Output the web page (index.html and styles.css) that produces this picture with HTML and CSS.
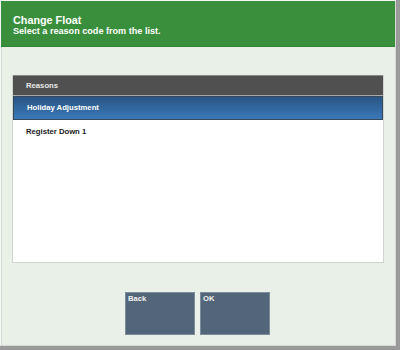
FILE: index.html
```html
<!DOCTYPE html>
<html>
<head>
<meta charset="utf-8">
<link rel="stylesheet" href="styles.css">
</head>
<body>
<div class="window">
  <div class="banner">
    <div class="title">Change Float</div>
    <div class="subtitle">Select a reason code from the list.</div>
  </div>
  <div class="content">
    <div class="list">
      <div class="list-head">Reasons</div>
      <div class="row selected">Holiday Adjustment</div>
      <div class="row">Register Down 1</div>
    </div>
    <div class="actions">
      <div class="btn">Back</div>
      <div class="btn">OK</div>
    </div>
  </div>
</div>
</body>
</html>
```

FILE: styles.css
```css
html, body {
  margin: 0;
  padding: 0;
  width: 400px;
  height: 350px;
  background: #9a9a9a;
  font-family: "Liberation Sans", Arial, sans-serif;
  font-weight: bold;
  overflow: hidden;
}
.window {
  box-sizing: border-box;
  width: 396px;
  height: 346px;
  background: #e9f0e8;
  border: 1px solid #f4f6f4;
  border-right-color: #d6d9d6;
  border-bottom-color: #d6d9d6;
  display: flex;
  flex-direction: column;
}
.banner {
  height: 46px;
  background: #3a8f3c;
  border-bottom: 1px solid #2f8631;
  box-sizing: border-box;
  padding: 13px 0 0 12px;
  color: #fff;
}
.title {
  font-size: 10.8px;
  line-height: 12px;
}
.subtitle {
  font-size: 9.1px;
  line-height: 11px;
}
.content {
  flex: 1;
  display: flex;
  flex-direction: column;
  padding: 28px 11px 0 11px;
  box-shadow: inset 1px 0 0 #d3dad3;
}
.list {
  height: 188px;
  box-sizing: border-box;
  background: #fff;
  border: 1px solid #d0d4d0;
  border-top: none;
  display: flex;
  flex-direction: column;
}
.list-head {
  height: 21px;
  box-sizing: border-box;
  background: #505050;
  border-top: 1px solid #8a8a8a;
  border-bottom: 1px solid #a8a8a8;
  color: #e8e8e8;
  font-size: 7.7px;
  line-height: 19px;
  padding-left: 13px;
}
.row {
  height: 24px;
  box-sizing: border-box;
  font-size: 7.7px;
  line-height: 24px;
  padding-left: 13px;
  color: #1a1a1a;
}
.row.selected {
  background: linear-gradient(#2a5584, #3a78b8);
  border: 1px solid #364a5e;
  color: #fff;
  line-height: 22px;
}
.actions {
  display: flex;
  justify-content: center;
  gap: 5px;
  margin-top: 29px;
  padding-right: 1px;
}
.btn {
  width: 70px;
  height: 43px;
  box-sizing: border-box;
  background: #536679;
  border: 1px solid #7d8c9a;
  color: #f0f0f0;
  font-size: 7.7px;
  line-height: 10px;
  padding: 1px 0 0 2px;
}
```
